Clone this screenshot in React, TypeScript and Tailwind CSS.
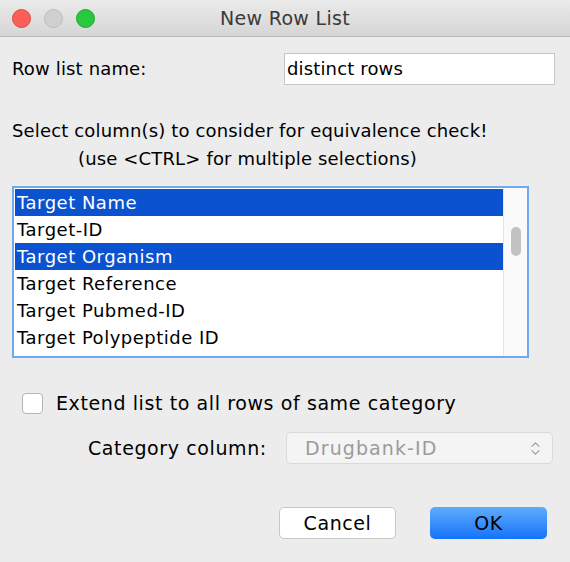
import { ChevronsUpDown } from "lucide-react"

const columns = [
  { name: "Target Name", selected: true },
  { name: "Target-ID", selected: false },
  { name: "Target Organism", selected: true },
  { name: "Target Reference", selected: false },
  { name: "Target Pubmed-ID", selected: false },
  { name: "Target Polypeptide ID", selected: false },
]

function TitleBar() {
  return (
    <div className="relative flex h-[37px] items-center border-b border-[#b9b9b9] bg-gradient-to-b from-[#ebebeb] to-[#d5d5d5] px-[12px]">
      <div className="flex gap-[13px]">
        <span className="h-[19px] w-[19px] rounded-full border border-[#e0443e] bg-[#fd5e57]" />
        <span className="h-[19px] w-[19px] rounded-full border border-[#bdbdbd] bg-[#d0d0d0]" />
        <span className="h-[19px] w-[19px] rounded-full border border-[#1aab29] bg-[#28c840]" />
      </div>
      <div className="absolute inset-0 flex items-center justify-center text-[19px] tracking-[0.3px] text-[#3a3a3a]">
        New Row List
      </div>
    </div>
  )
}

export default function App() {
  return (
    <div
      className="h-[562px] w-[570px] overflow-hidden bg-[#ececec] text-[18px] leading-[24px] tracking-[0.15px] text-black"
      style={{ fontFamily: '"DejaVu Sans", sans-serif' }}
    >
      <TitleBar />

      <div className="flex items-center justify-between pl-[12px] pr-[15px] pt-[16px]">
        <span>Row list name:</span>
        <div className="flex h-[32px] w-[271px] items-center border border-[#c6c6c6] bg-white px-[2px]">
          distinct rows
        </div>
      </div>

      <div className="mt-[34px] pl-[12px]">Select column(s) to consider for equivalence check!</div>
      <div className="mt-[4px] pl-[78px]">(use &lt;CTRL&gt; for multiple selections)</div>

      <div className="ml-[12px] mt-[15px] flex h-[172px] w-[517px] border-2 border-[#6faaf0] bg-white">
        <div className="flex-1 pl-[1px] pt-[1px] tracking-[0.5px]">
          {columns.map((c) => (
            <div
              key={c.name}
              className={`flex h-[27px] items-center pl-[2px] ${
                c.selected ? "bg-[#0b52d1] text-white" : ""
              }`}
            >
              {c.name}
            </div>
          ))}
        </div>
        <div className="w-[24px] border-l border-[#e6e6e6] bg-[#fafafa] pt-[39px]">
          <div className="mx-auto h-[29px] w-[10px] rounded-full bg-[#c2c2c2]" />
        </div>
      </div>

      <div className="mt-[34px] flex h-[22px] items-center gap-[13px] pl-[22px] text-[19px] tracking-[0.6px]">
        <span className="h-[21px] w-[21px] rounded-[4px] border border-[#b4b4b4] bg-white" />
        <span>Extend list to all rows of same category</span>
      </div>

      <div className="mt-[18px] flex items-center justify-between pl-[88px] pr-[17px] text-[19px] tracking-[0.6px]">
        <span>Category column:</span>
        <div className="flex h-[32px] w-[267px] items-center justify-between rounded-[5px] border border-[#dadada] bg-[#f4f4f4] pl-[18px] pr-[8px] tracking-[1.1px] text-[#9b9b9b]">
          <span>Drugbank-ID</span>
          <ChevronsUpDown size={17} strokeWidth={1.5} className="text-[#9a9a9a]" />
        </div>
      </div>

      <div className="mt-[43px] flex justify-end gap-[34px] pr-[23px] text-[19px] tracking-[0.6px]">
        <button className="h-[32px] w-[117px] rounded-[5px] border border-[#c8c8c8] bg-white">
          Cancel
        </button>
        <button className="h-[32px] w-[117px] rounded-[5px] bg-gradient-to-b from-[#5eabfc] to-[#1272f9]">
          OK
        </button>
      </div>
    </div>
  )
}
